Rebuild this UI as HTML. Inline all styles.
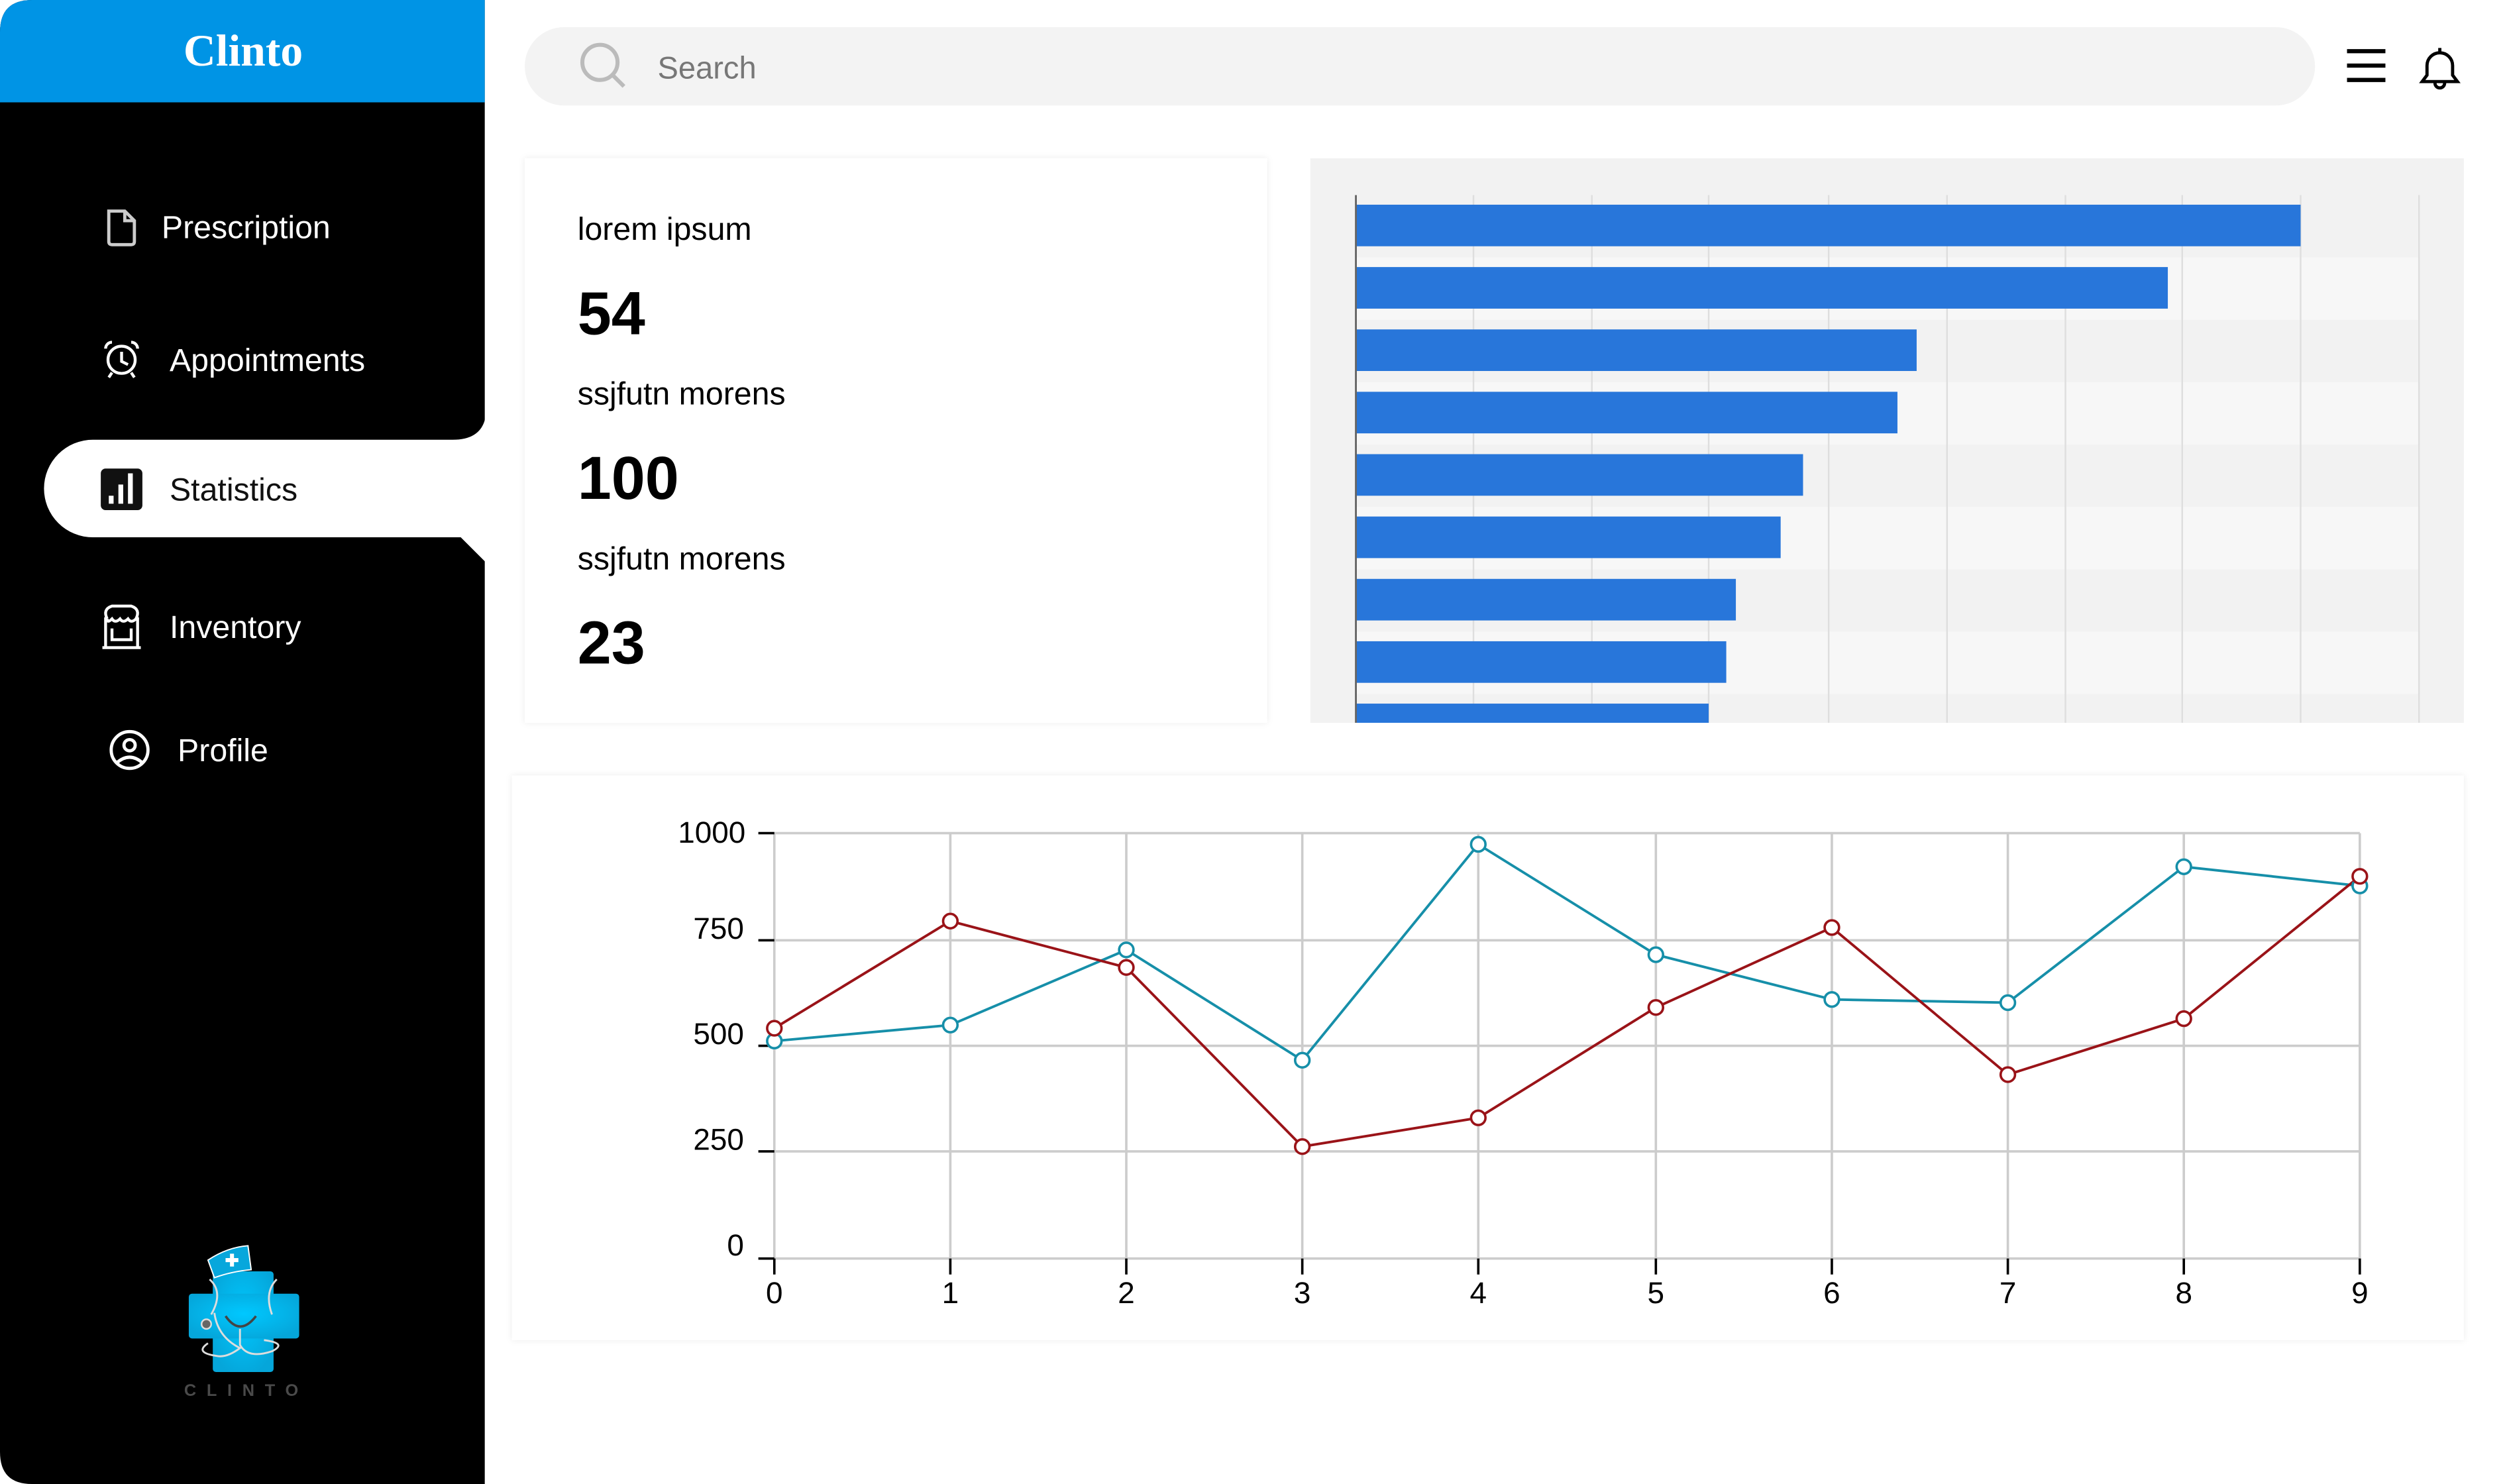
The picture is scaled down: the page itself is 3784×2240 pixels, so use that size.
<!DOCTYPE html>
<html><head><meta charset="utf-8"><style>
html,body{margin:0;padding:0;background:#fff;width:3784px;height:2240px;overflow:hidden}
svg{display:block}
text{font-family:"Liberation Sans",sans-serif}
</style></head><body>
<svg width="3784" height="2240" viewBox="0 0 1567 928" preserveAspectRatio="none" xmlns="http://www.w3.org/2000/svg">
<defs>
<filter id="sh" x="-5%" y="-5%" width="110%" height="110%"><feDropShadow dx="0" dy="0" stdDeviation="2" flood-color="#000" flood-opacity="0.08"/></filter>
<radialGradient id="cg" cx="50%" cy="45%" r="60%"><stop offset="0" stop-color="#00c8ff"/><stop offset="1" stop-color="#05a6da"/></radialGradient>
</defs>
<rect width="1567" height="928" fill="#fff"/>
<path d="M20,0 H303 V928 H20 Q0,928 0,908 V20 Q0,0 20,0 Z" fill="#000"/>
<path d="M20,0 H303 V64 H0 V20 Q0,0 20,0 Z" fill="#0094e5"/>
<text x="152" y="41" text-anchor="middle" font-weight="bold" font-size="28" fill="#fff" style="font-family:'Liberation Serif',serif">Clinto</text>
<path d="M304,255 Q304,275 283,275 H58 A30.5,30.5 0 0 0 58,336 H288 L304,352 Z" fill="#fff"/>
<g fill="none" stroke="#ccc" stroke-width="2"><path d="M68,132 H78 L84,138 V151 Q84,153 82,153 H70 Q68,153 68,151 Z"/><path d="M78,132 V138 H84"/></g>
<text x="101" y="149" font-size="20" fill="#fff">Prescription</text>
<g fill="none" stroke="#fff" stroke-width="1.8"><circle cx="76" cy="225" r="8.5"/><path d="M76,220 V226 L80,228"/><path d="M66,218 A4,4 0 0 1 70,214 M86,218 A4,4 0 0 0 82,214"/><path d="M70,233 L68,236 M82,233 L84,236"/></g>
<text x="106" y="232" font-size="20" fill="#fff">Appointments</text>
<rect x="63" y="293" width="26" height="26" rx="3" fill="#111"/>
<g fill="#fff"><rect x="68" y="310" width="3" height="5"/><rect x="74" y="303" width="3" height="12"/><rect x="80" y="296" width="3" height="19"/></g>
<text x="106" y="313" font-size="20" fill="#111">Statistics</text>
<g fill="none" stroke="#fff" stroke-width="1.8"><path d="M67,387 Q64,381 70,379 H82 Q88,381 85,387 Q82,390 80,387 Q77,390 75,387 Q72,390 70,387 Q67,390 67,387"/><path d="M66,386 V405 M86,386 V405 M64,405 H88"/><path d="M70,393 V400 H82 V393"/></g>
<text x="106" y="399" font-size="20" fill="#fff">Inventory</text>
<g fill="none" stroke="#fff" stroke-width="2"><circle cx="81" cy="469" r="11.5"/><circle cx="81" cy="466" r="3.5"/><path d="M73,477 Q81,470 89,477"/></g>
<text x="111" y="476" font-size="20" fill="#fff">Profile</text>
<g>
<rect x="133" y="795" width="38" height="63" rx="2" fill="url(#cg)"/>
<rect x="118" y="809" width="69" height="28" rx="2" fill="url(#cg)"/>
<path d="M130,788 Q142,780 155,779 L157,794 Q145,795 134,799 Z" fill="#07a7dc" stroke="#fff" stroke-width="0.8"/>
<path d="M141,788 H149 M145,784 V792" stroke="#fff" stroke-width="2.5"/>
<g fill="none" stroke-width="1.2"><path d="M134,821 Q136,836 150,843 Q142,849 136,848 Q121,846 130,840" stroke="#ddd"/><path d="M132,822 Q140,808 131,800 M170,822 Q165,808 173,800" stroke="#ddd"/><path d="M141,823 Q150,836 160,823" stroke="#444" stroke-width="1.5"/><path d="M150,831 V841 Q155,850 170,845 Q180,840 165,838" stroke="#ddd"/></g>
<circle cx="129" cy="828" r="3" fill="#666" stroke="#ddd"/>
<text x="154" y="873" text-anchor="middle" font-size="10.5" font-weight="bold" fill="#4a4a4a" letter-spacing="6.5">CLINTO</text>
</g>
<rect x="328" y="17" width="1119" height="49" rx="24.5" fill="#f3f3f3"/>
<circle cx="375" cy="39" r="11" fill="none" stroke="#bbb" stroke-width="2.5"/>
<path d="M383,47 L390,54" stroke="#bbb" stroke-width="2.5"/>
<text x="411" y="49" font-size="19.5" fill="#777">Search</text>
<g stroke="#000" stroke-width="2.6"><path d="M1467,32 H1491 M1467,41 H1491 M1467,50 H1491"/></g>
<g fill="none" stroke="#000" stroke-width="2"><path d="M1514,51 L1517,47 V41 A8,8 0 0 1 1533,41 V47 L1536,51 Z"/><path d="M1522,52 A3,3 0 0 0 1528,52"/><path d="M1525,30 V33"/></g>
<rect x="328" y="99" width="464" height="353" fill="#fff" filter="url(#sh)"/>
<text x="361" y="150" font-size="20" fill="#000">lorem ipsum</text>
<text x="361" y="209" font-size="38" font-weight="bold" fill="#000">54</text>
<text x="361" y="253" font-size="20" fill="#000">ssjfutn morens</text>
<text x="361" y="312" font-size="38" font-weight="bold" fill="#000">100</text>
<text x="361" y="356" font-size="20" fill="#000">ssjfutn morens</text>
<text x="361" y="415" font-size="38" font-weight="bold" fill="#000">23</text>
<rect x="819" y="99" width="721" height="353" fill="#f2f2f2"/>
<g fill="#f7f7f7"><rect x="848" y="161" width="664" height="39"/><rect x="848" y="239" width="664" height="39"/><rect x="848" y="317" width="664" height="39"/><rect x="848" y="395" width="664" height="39"/></g>
<g stroke="#dedede" stroke-width="1"><path d="M921,122V452 M995,122V452 M1068,122V452 M1143,122V452 M1217,122V452 M1291,122V452 M1364,122V452 M1438,122V452 M1512,122V452"/></g>
<g fill="#2876da"><rect x="848" y="128" width="590" height="26"/><rect x="848" y="167" width="507" height="26"/><rect x="848" y="206" width="350" height="26"/><rect x="848" y="245" width="338" height="26"/><rect x="848" y="284" width="279" height="26"/><rect x="848" y="323" width="265" height="26"/><rect x="848" y="362" width="237" height="26"/><rect x="848" y="401" width="231" height="26"/><rect x="848" y="440" width="220" height="12"/></g>
<path d="M847.5,122V452" stroke="#666" stroke-width="1.2"/>
<rect x="320" y="485" width="1220" height="353" fill="#fff" filter="url(#sh)"/>
<g stroke="#ccc" stroke-width="1.5" fill="none"><path d="M484,521H1475 M484,588H1475 M484,654H1475 M484,720H1475 M484,787H1475"/><path d="M484,521V787 M594,521V787 M704,521V787 M814,521V787 M924,521V787 M1035,521V787 M1145,521V787 M1255,521V787 M1365,521V787 M1475,521V787"/></g>
<g stroke="#000" stroke-width="1.5"><path d="M474,521H484 M474,588H484 M474,654H484 M474,720H484 M474,787H484"/><path d="M484,787V797 M594,787V797 M704,787V797 M814,787V797 M924,787V797 M1035,787V797 M1145,787V797 M1255,787V797 M1365,787V797 M1475,787V797"/></g>
<g font-size="19" fill="#000" text-anchor="end" style="font-family:'Liberation Sans Narrow','Liberation Sans',sans-serif"><text x="466" y="527">1000</text><text x="465" y="587">750</text><text x="465" y="653">500</text><text x="465" y="719">250</text><text x="465" y="785">0</text></g>
<g font-size="19" fill="#000" text-anchor="middle" style="font-family:'Liberation Sans Narrow','Liberation Sans',sans-serif"><text x="484" y="815">0</text><text x="594" y="815">1</text><text x="704" y="815">2</text><text x="814" y="815">3</text><text x="924" y="815">4</text><text x="1035" y="815">5</text><text x="1145" y="815">6</text><text x="1255" y="815">7</text><text x="1365" y="815">8</text><text x="1475" y="815">9</text></g>
<polyline points="484,651 594,641 704,594 814,663 924,528 1035,597 1145,625 1255,627 1365,542 1475,554" fill="none" stroke="#168fa9" stroke-width="1.6"/>
<polyline points="484,643 594,576 704,605 814,717 924,699 1035,630 1145,580 1255,672 1365,637 1475,548" fill="none" stroke="#9a1318" stroke-width="1.6"/>
<g fill="#fff" stroke="#168fa9" stroke-width="1.5"><circle cx="484" cy="651" r="4.5"/><circle cx="594" cy="641" r="4.5"/><circle cx="704" cy="594" r="4.5"/><circle cx="814" cy="663" r="4.5"/><circle cx="924" cy="528" r="4.5"/><circle cx="1035" cy="597" r="4.5"/><circle cx="1145" cy="625" r="4.5"/><circle cx="1255" cy="627" r="4.5"/><circle cx="1365" cy="542" r="4.5"/><circle cx="1475" cy="554" r="4.5"/></g>
<g fill="#fff" stroke="#9a1318" stroke-width="1.5"><circle cx="484" cy="643" r="4.5"/><circle cx="594" cy="576" r="4.5"/><circle cx="704" cy="605" r="4.5"/><circle cx="814" cy="717" r="4.5"/><circle cx="924" cy="699" r="4.5"/><circle cx="1035" cy="630" r="4.5"/><circle cx="1145" cy="580" r="4.5"/><circle cx="1255" cy="672" r="4.5"/><circle cx="1365" cy="637" r="4.5"/><circle cx="1475" cy="548" r="4.5"/></g>
</svg>
</body></html>
